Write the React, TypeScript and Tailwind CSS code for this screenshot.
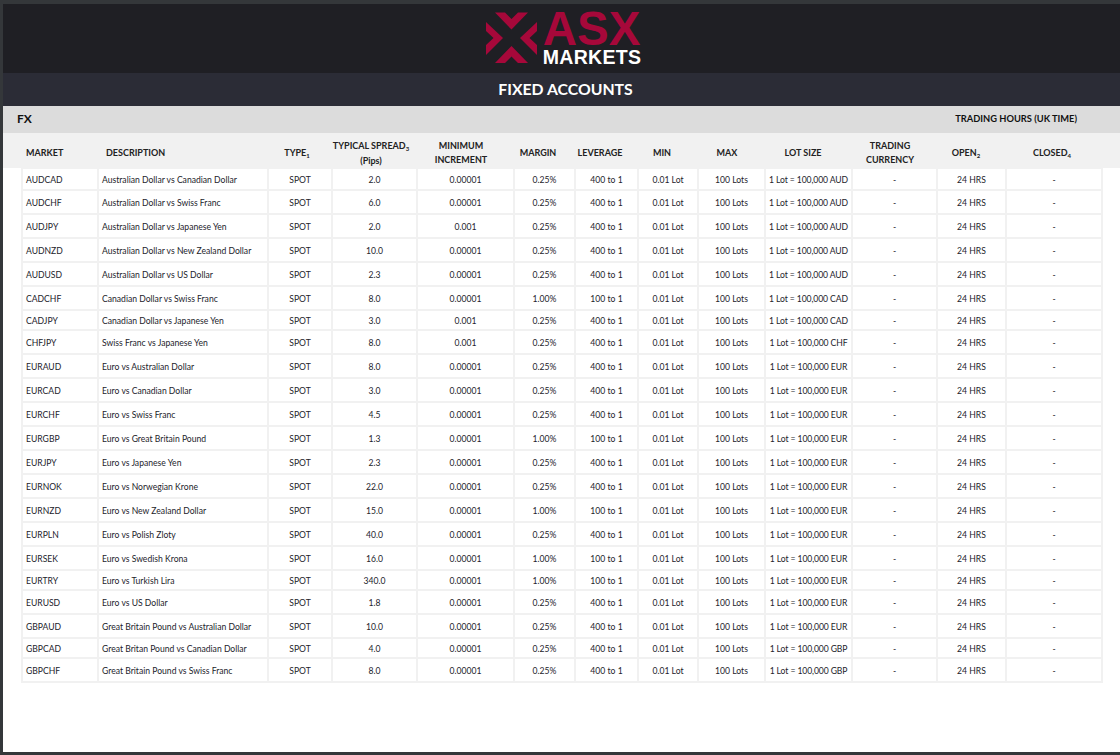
import React from "react";

const grid = "grid grid-cols-[74px_168px_62px_83px_95px_59px_61px_58px_65px_85px_83px_67px_94px] gap-x-[2px]";

const R = (sym: string, desc: string, spread: string, inc: string, margin: string, lev: string, cur: string, h: string = "h-[22px]") => ({ sym, desc, spread, inc, margin, lev, cur, h });

const rows = [
  R("AUDCAD", "Australian Dollar vs Canadian Dollar", "2.0", "0.00001", "0.25%", "400 to 1", "AUD", "h-[20px]"),
  R("AUDCHF", "Australian Dollar vs Swiss Franc", "6.0", "0.00001", "0.25%", "400 to 1", "AUD"),
  R("AUDJPY", "Australian Dollar vs Japanese Yen", "2.0", "0.001", "0.25%", "400 to 1", "AUD"),
  R("AUDNZD", "Australian Dollar vs New Zealand Dollar", "10.0", "0.00001", "0.25%", "400 to 1", "AUD"),
  R("AUDUSD", "Australian Dollar vs US Dollar", "2.3", "0.00001", "0.25%", "400 to 1", "AUD"),
  R("CADCHF", "Canadian Dollar vs Swiss Franc", "8.0", "0.00001", "1.00%", "100 to 1", "CAD"),
  R("CADJPY", "Canadian Dollar vs Japanese Yen", "3.0", "0.001", "0.25%", "400 to 1", "CAD", "h-[18px]"),
  R("CHFJPY", "Swiss Franc vs Japanese Yen", "8.0", "0.001", "0.25%", "400 to 1", "CHF"),
  R("EURAUD", "Euro vs Australian Dollar", "8.0", "0.00001", "0.25%", "400 to 1", "EUR"),
  R("EURCAD", "Euro vs Canadian Dollar", "3.0", "0.00001", "0.25%", "400 to 1", "EUR"),
  R("EURCHF", "Euro vs Swiss Franc", "4.5", "0.00001", "0.25%", "400 to 1", "EUR"),
  R("EURGBP", "Euro vs Great Britain Pound", "1.3", "0.00001", "1.00%", "100 to 1", "EUR"),
  R("EURJPY", "Euro vs Japanese Yen", "2.3", "0.00001", "0.25%", "400 to 1", "EUR"),
  R("EURNOK", "Euro vs Norwegian Krone", "22.0", "0.00001", "0.25%", "400 to 1", "EUR"),
  R("EURNZD", "Euro vs New Zealand Dollar", "15.0", "0.00001", "1.00%", "100 to 1", "EUR"),
  R("EURPLN", "Euro vs Polish Zloty", "40.0", "0.00001", "0.25%", "400 to 1", "EUR"),
  R("EURSEK", "Euro vs Swedish Krona", "16.0", "0.00001", "1.00%", "100 to 1", "EUR"),
  R("EURTRY", "Euro vs Turkish Lira", "340.0", "0.00001", "1.00%", "100 to 1", "EUR", "h-[18px]"),
  R("EURUSD", "Euro vs US Dollar", "1.8", "0.00001", "0.25%", "400 to 1", "EUR"),
  R("GBPAUD", "Great Britain Pound vs Australian Dollar", "10.0", "0.00001", "0.25%", "400 to 1", "EUR"),
  R("GBPCAD", "Great Britan Pound vs Canadian Dollar", "4.0", "0.00001", "0.25%", "400 to 1", "GBP", "h-[18px]"),
  R("GBPCHF", "Great Britain Pound vs Swiss Franc", "8.0", "0.00001", "0.25%", "400 to 1", "GBP"),
];

function Cell({ children, left }: { children: React.ReactNode; left?: boolean }) {
  return (
    <div className={`bg-white flex items-center whitespace-nowrap pt-[2px] ${left ? "pl-[3px]" : "justify-center"}`}>
      {children}
    </div>
  );
}

function Sub({ children }: { children: React.ReactNode }) {
  return <span className="text-[6px] relative top-[2px]">{children}</span>;
}

function Logo() {
  return (
    <div className="flex items-start h-[69px] pl-[4px]">
      <svg width="54" height="54" viewBox="0 0 54 54" className="mt-[8px] mr-[3px]">
        <g fill="#a6083a">
          <path d="M9 0.5H19L25.5 7L32 0.5H42L25.5 17.5Z" />
          <path d="M9 51H19L25.5 44.5L32 51H42L25.5 34Z" />
          <path d="M0 10L17 26L0 43V33L7.5 26L0 19Z" />
          <path d="M51 10L34 26L51 43V33L43.5 26L51 19Z" />
        </g>
      </svg>
      <div className="flex flex-col font-['Liberation_Sans',sans-serif] font-bold">
        <span className="text-[47.5px] leading-[34px] h-[34px] mt-[8px] text-[#a6083a]">ASX</span>
        <span className="text-[19.5px] leading-[16px] mt-[3px] text-white tracking-[0.3px]">MARKETS</span>
      </div>
    </div>
  );
}

export default function App() {
  return (
    <div className="h-[755px] w-[1120px] overflow-hidden bg-[#34373a] pl-[3px] pt-[4px] font-['Lato',sans-serif] text-[#23232b]">
      <div className="h-[748px] bg-white flex flex-col">
        <header className="h-[69px] bg-[#1f1f24] flex justify-center shrink-0">
          <Logo />
        </header>
        <div className="h-[33px] bg-[#2b2c36] flex items-center justify-center pl-[8px] pb-[2px] text-white font-bold text-[15.8px] shrink-0">
          FIXED ACCOUNTS
        </div>
        <div className="h-[27px] bg-[#dcdcdc] flex items-center justify-between shrink-0 pl-[14px] pr-[43px] font-bold text-[#111]">
          <span className="text-[12px] mb-[2px]">FX</span>
          <span className="text-[9.3px] mb-[1px]">TRADING HOURS (UK TIME)</span>
        </div>
        <div className={`${grid} h-[35px] bg-[#f1f1f1] pl-[20px] pt-[5px] font-bold text-[9px] leading-[14px] text-[#222] shrink-0`}>
          <div className="flex items-center pl-[3px]">MARKET</div>
          <div className="flex items-center pl-[7px]">DESCRIPTION</div>
          <div className="flex items-center justify-center pr-[6px]"><span>TYPE<Sub>1</Sub></span></div>
          <div className="flex items-center justify-center pr-[7px] text-center whitespace-nowrap"><span>TYPICAL SPREAD<Sub>3</Sub><br />(Pips)</span></div>
          <div className="flex items-center justify-center pr-[9px] text-center"><span>MINIMUM<br />INCREMENT</span></div>
          <div className="flex items-center justify-center pr-[13px]">MARGIN</div>
          <div className="flex items-center justify-center pr-[13px]">LEVERAGE</div>
          <div className="flex items-center justify-center pr-[12px]">MIN</div>
          <div className="flex items-center justify-center pr-[9px]">MAX</div>
          <div className="flex items-center justify-center pr-[11px]">LOT SIZE</div>
          <div className="flex items-center justify-center pr-[9px] text-center"><span>TRADING<br />CURRENCY</span></div>
          <div className="flex items-center justify-center pr-[11px]"><span>OPEN<Sub>2</Sub></span></div>
          <div className="flex items-center justify-center pr-[4px]"><span>CLOSED<Sub>4</Sub></span></div>
        </div>
        <div className="ml-[18px] w-[1082px] bg-[#f1f1f1] p-[2px] pt-[1px] flex flex-col gap-y-[2px] text-[8.6px]">
          {rows.map((r) => (
            <div key={r.sym} className={`${grid} ${r.h}`}>
              <Cell left>{r.sym}</Cell>
              <Cell left>{r.desc}</Cell>
              <Cell>SPOT</Cell>
              <Cell>{r.spread}</Cell>
              <Cell>{r.inc}</Cell>
              <Cell>{r.margin}</Cell>
              <Cell>{r.lev}</Cell>
              <Cell>0.01 Lot</Cell>
              <Cell>100 Lots</Cell>
              <Cell><span className="tracking-[-0.1px]">{`1 Lot = 100,000 ${r.cur}`}</span></Cell>
              <Cell>-</Cell>
              <Cell>24 HRS</Cell>
              <Cell>-</Cell>
            </div>
          ))}
        </div>
      </div>
    </div>
  );
}
